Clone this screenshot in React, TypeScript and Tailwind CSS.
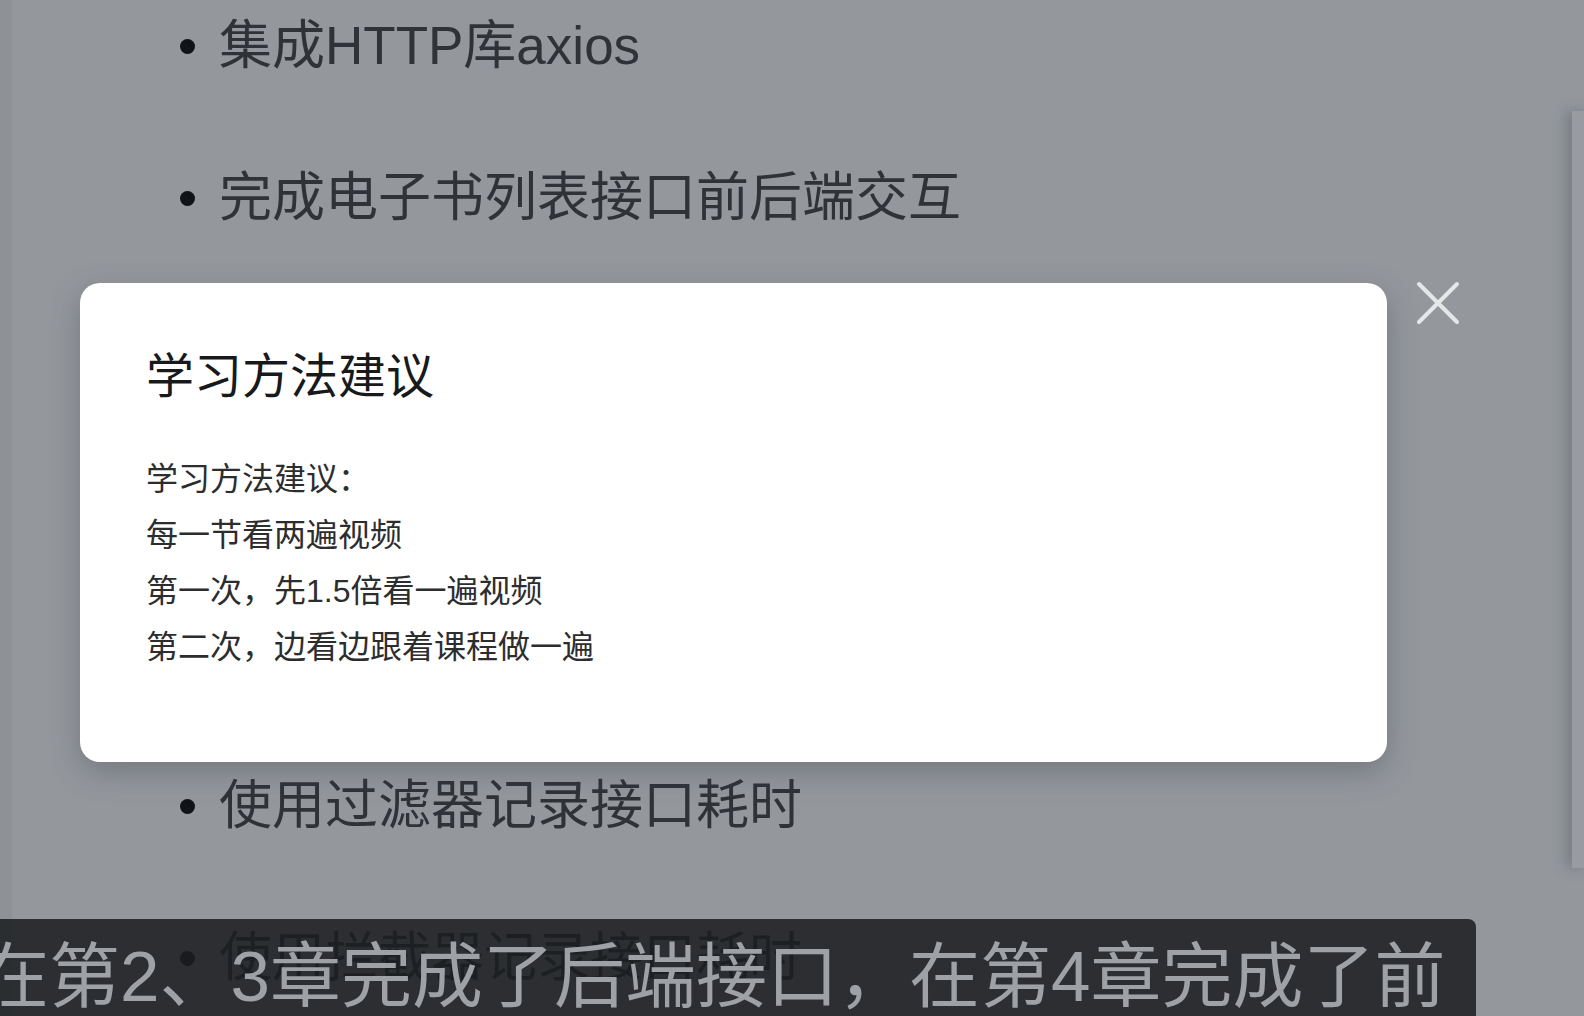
const font = "font-['Liberation_Sans','Noto_Sans_CJK_SC',sans-serif]";

const items = [
  "集成HTTP库axios",
  "完成电子书列表接口前后端交互",
  "完成电子书新增接口",
  "完成电子书编辑接口",
  "完成电子书删除接口",
  "使用过滤器记录接口耗时",
  "使用拦截器记录接口耗时",
];

const tips = [
  "学习方法建议：",
  "每一节看两遍视频",
  "第一次，先1.5倍看一遍视频",
  "第二次，边看边跟着课程做一遍",
];

const CloseIcon = () => (
  <svg width="44" height="44" viewBox="0 0 44 44" fill="none">
    <path
      d="M3 3 L41 41 M41 3 L3 41"
      stroke="#e6e7e9"
      strokeWidth="4"
      strokeLinecap="round"
    />
  </svg>
);

const Notes = () => (
  <ul className="mt-[-30px] flex flex-col">
    {items.map((text) => (
      <li
        key={text}
        className="flex h-[152px] items-center gap-[24px] pl-[168px] text-[53px] leading-[152px] text-[#2f3237]"
      >
        <span className="h-[15px] w-[15px] shrink-0 rounded-full bg-[#121316]" />
        <span className="whitespace-nowrap">{text}</span>
      </li>
    ))}
  </ul>
);

const TipsModal = () => (
  <div className="absolute left-[80px] top-[283px] h-[479px] w-[1307px] rounded-[20px] bg-white px-[66px] pt-[58px] shadow-[0_10px_30px_rgba(60,64,70,0.35)]">
    <h2 className="text-[48px] font-normal leading-[72px] text-[#18191b]">学习方法建议</h2>
    <div className="mt-[38px] flex flex-col text-[32px] leading-[56px] text-[#2c2d2f]">
      {tips.map((line) => (
        <p key={line}>{line}</p>
      ))}
    </div>
  </div>
);

const Subtitle = () => (
  <div className="absolute bottom-0 left-0 h-[97px] w-[1476px] overflow-hidden rounded-tr-[8px] bg-[rgba(27,29,33,0.86)] pt-[22px]">
    <p className="ml-[-22px] whitespace-nowrap text-[71px] leading-[72px] text-[#9ea1a5]">
      在第2、3章完成了后端接口，在第4章完成了前
    </p>
  </div>
);

export default function App() {
  return (
    <div className={`relative flex h-[1016px] w-[1584px] overflow-hidden bg-[#94989d] ${font}`}>
      <div className="w-[12px] shrink-0 bg-[#8e9297]" />
      <div className="flex-1">
        <Notes />
      </div>

      <div className="absolute left-[1572px] top-[111px] h-[757px] w-[20px] bg-[#989ca1] shadow-[-6px_0_14px_rgba(70,74,80,0.35)]" />

      <TipsModal />

      <button className="absolute left-[1416px] top-[281px]">
        <CloseIcon />
      </button>

      <Subtitle />
    </div>
  );
}
